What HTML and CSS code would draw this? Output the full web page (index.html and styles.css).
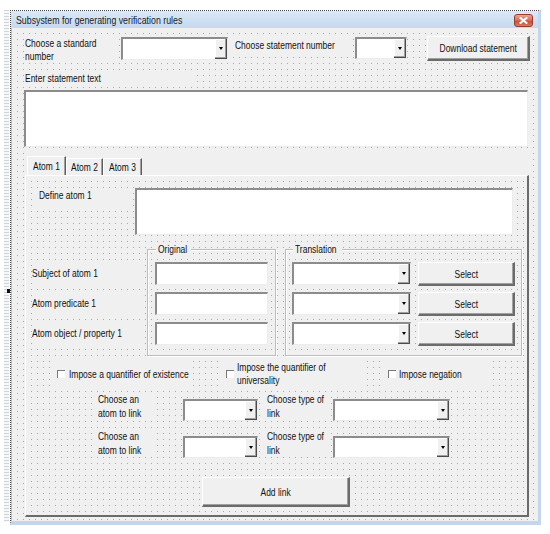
FILE: index.html
```html
<!DOCTYPE html>
<html lang="en">
<head>
  <meta charset="UTF-8">
  <title>Subsystem for generating verification rules</title>
  <link rel="stylesheet" href="styles.css">
</head>
<body>
  <div class="screen">
    <div class="gutter">
      <div class="rail"></div>
      <div class="handle"></div>
    </div>

    <div class="window">
      <div class="titlebar">
        <span class="t caption">Subsystem for generating verification rules</span>
        <div class="close-btn">
          <svg width="9" height="7" viewBox="0 0 9 7"><path d="M1.5 1 L7.5 6 M7.5 1 L1.5 6" stroke="#fff" stroke-width="2" stroke-linecap="square"/></svg>
        </div>
      </div>

      <div class="client dotted">
        <!-- Standard / statement choice -->
        <div class="row top-row">
          <div class="lbl lbl-standard"><span class="t">Choose a standard<br>number</span></div>
          <div class="combo combo-standard"><span class="drop"></span></div>
          <div class="lbl lbl-statement"><span class="t">Choose statement number</span></div>
          <div class="combo combo-statement"><span class="drop"></span></div>
          <div class="btn btn-download"><span class="t">Download statement</span></div>
        </div>

        <div class="lbl lbl-enter"><span class="t">Enter statement text</span></div>
        <div class="textbox statement-text"></div>

        <!-- Atoms multipage -->
        <div class="multipage">
          <div class="tabs">
            <div class="tab tab-1 active"><span class="t">Atom 1</span></div>
            <div class="tab tab-2"><span class="t">Atom 2</span></div>
            <div class="tab tab-3"><span class="t">Atom 3</span></div>
          </div>

          <div class="page dotted">
            <div class="row define-row">
              <div class="lbl lbl-define"><span class="t">Define atom 1</span></div>
              <div class="textbox define-text"></div>
            </div>

            <div class="row frames-row">
              <div class="atom-labels">
                <div class="lbl lbl-part"><span class="t">Subject of atom 1</span></div>
                <div class="lbl lbl-part"><span class="t">Atom predicate 1</span></div>
                <div class="lbl lbl-part"><span class="t">Atom object / property 1</span></div>
              </div>

              <fieldset class="frame frame-original">
                <legend class="legend-original"><span class="t">Original</span></legend>
                <div class="textbox part-text"></div>
                <div class="textbox part-text"></div>
                <div class="textbox part-text"></div>
              </fieldset>

              <fieldset class="frame frame-translation">
                <legend class="legend-translation"><span class="t">Translation</span></legend>
                <div class="pick-row">
                  <div class="combo part-combo"><span class="drop"></span></div>
                  <div class="btn btn-select"><span class="t">Select</span></div>
                </div>
                <div class="pick-row">
                  <div class="combo part-combo"><span class="drop"></span></div>
                  <div class="btn btn-select"><span class="t">Select</span></div>
                </div>
                <div class="pick-row">
                  <div class="combo part-combo"><span class="drop"></span></div>
                  <div class="btn btn-select"><span class="t">Select</span></div>
                </div>
              </fieldset>
            </div>

            <div class="row checks-row">
              <div class="check check-exist"><span class="box"></span><span class="t">Impose a quantifier of existence</span></div>
              <div class="check check-univ"><span class="box"></span><span class="t">Impose the quantifier of<br>universality</span></div>
              <div class="check check-neg"><span class="box"></span><span class="t">Impose negation</span></div>
            </div>

            <div class="row link-row link-row-1">
              <div class="lbl lbl-atom"><span class="t">Choose an<br>atom to link</span></div>
              <div class="combo combo-atom"><span class="drop"></span></div>
              <div class="lbl lbl-type"><span class="t">Choose type of<br>link</span></div>
              <div class="combo combo-type"><span class="drop"></span></div>
            </div>
            <div class="row link-row link-row-2">
              <div class="lbl lbl-atom"><span class="t">Choose an<br>atom to link</span></div>
              <div class="combo combo-atom"><span class="drop"></span></div>
              <div class="lbl lbl-type"><span class="t">Choose type of<br>link</span></div>
              <div class="combo combo-type"><span class="drop"></span></div>
            </div>

            <div class="btn btn-add"><span class="t">Add link</span></div>
          </div>
        </div>
      </div>
    </div>
  </div>
</body>
</html>
```

FILE: styles.css
```css
* {
  box-sizing: border-box;
}

body {
  margin: 0;
  background: #fff;
  font-family: "Liberation Sans", Arial, sans-serif;
  font-size: 11px;
  color: #111;
}

/* the form font is narrower than Arial: squeeze the text runs */
.t {
  display: inline-block;
  vertical-align: top;
  white-space: nowrap;
  transform: scaleX(0.77);
  transform-origin: 0 50%;
}

.screen {
  display: flex;
  padding-top: 10px;
}

/* left edge of the editor with the selection handle */
.gutter {
  position: relative;
  width: 10px;
  height: 512px;
}

.rail {
  margin-left: 4px;
  width: 5px;
  height: 100%;
  background: repeating-linear-gradient(180deg, #cdd4de 0 1px, #f6f7f9 1px 3px);
}

.handle {
  position: absolute;
  top: 279px;
  left: 7px;
  width: 3px;
  height: 4px;
  background: #111;
}

.window {
  width: 531px;
  height: 515px;
  border-top: 1px dotted #444;
  border-left: 1px dotted #444;
  border-right: 3px solid #c3d6ee;
  border-bottom: 4px solid #c3d6ee;
  display: flex;
  flex-direction: column;
}

.titlebar {
  height: 17px;
  display: flex;
  align-items: center;
  padding-left: 5px;
  background: linear-gradient(#dbe8f7, #c5d9f0);
  color: #1b1b1b;
}

.titlebar .caption {
  transform: scaleX(0.8);
}

.close-btn {
  margin-left: auto;
  margin-right: 5px;
  margin-top: 2px;
  width: 19px;
  height: 13px;
  border: 1px solid #9a3c2c;
  border-radius: 3px;
  background: linear-gradient(#e9a797, #d56a55 50%, #c44a36 51%, #d97a62);
  display: flex;
  align-items: center;
  justify-content: center;
}

/* grid of the form designer */
.dotted {
  background-color: #f0f0f0;
  background-image: linear-gradient(90deg, #f0f0f0 5px, transparent 5px), linear-gradient(#f0f0f0 5px, #a6a6a6 5px);
  background-size: 6px 6px;
}

.client {
  flex: 1;
  display: flex;
  flex-direction: column;
  align-items: flex-start;
  padding: 8px 0 0 12px;
  border-left: 1px solid #aebfd2;
}

.row {
  display: flex;
  align-items: flex-start;
}

.lbl {
  background: #f0f0f0;
  line-height: 13px;
}

/* controls */
.textbox {
  background: #fff;
  border-style: solid;
  border-width: 2px 1px 1px 2px;
  border-color: #8c8c8c #ececec #ececec #8c8c8c;
}

.combo {
  display: flex;
  justify-content: flex-end;
  background: #fff;
  border-style: solid;
  border-width: 2px 1px 1px 2px;
  border-color: #8c8c8c #ececec #ececec #8c8c8c;
}

.drop {
  width: 12px;
  height: 100%;
  display: flex;
  align-items: center;
  justify-content: center;
  background: #f0f0f0;
  border-right: 1px solid #4a4a4a;
  border-bottom: 1px solid #4a4a4a;
  box-shadow: inset -1px -1px #a0a0a0, inset 1px 1px #fff;
}

.drop::after {
  content: "";
  border-left: 2.5px solid transparent;
  border-right: 2.5px solid transparent;
  border-top: 3px solid #000;
}

.btn {
  display: flex;
  align-items: center;
  justify-content: center;
  background: #f0f0f0;
  border-style: solid;
  border-width: 1px 2px 2px 1px;
  border-color: #fff #6b6b6b #6b6b6b #fff;
  box-shadow: inset -1px -1px #a0a0a0;
}

.btn .t,
.tab .t {
  transform-origin: 50% 50%;
}

/* first row */
.top-row {
  height: 26px;
}

.lbl-standard {
  width: 94px;
  height: 26px;
  padding: 1px 0 0 1px;
}

.combo-standard {
  margin: 1px 0 0 3px;
  width: 107px;
  height: 23px;
}

.lbl-statement {
  margin: 1px 0 0 5px;
  width: 117px;
  height: 17px;
  padding: 2px 0 0 2px;
}

.combo-statement {
  margin: 1px 0 0 5px;
  width: 52px;
  height: 22px;
}

.btn-download {
  margin-left: 20px;
  width: 103px;
  height: 25px;
}

.lbl-enter {
  margin-top: 9px;
  width: 173px;
  height: 16px;
  padding: 1px 0 0 1px;
}

.statement-text {
  margin-top: 3px;
  width: 504px;
  height: 57px;
}

/* multipage */
.multipage {
  margin: 3px 0 0 1px;
  width: 504px;
  height: 367px;
  display: flex;
  flex-direction: column;
}

.tabs {
  height: 25px;
  display: flex;
  align-items: flex-end;
  padding-left: 2px;
  background: #f0f0f0;
}

.tab {
  height: 17px;
  line-height: 16px;
  display: flex;
  justify-content: center;
  border-top: 1px solid #fff;
  border-left: 1px solid #fff;
  border-right: 1px solid #5e5e5e;
  box-shadow: inset -1px 0 #a0a0a0;
}

.tab.active {
  height: 19px;
  line-height: 18px;
}

.tab-1 { width: 39px; }
.tab-2 { width: 37px; }
.tab-3 { width: 39px; }

.page {
  flex: 1;
  display: flex;
  flex-direction: column;
  align-items: flex-start;
  padding: 12px 0 0 6px;
  border-top: 1px solid #fff;
  border-left: 1px solid #fff;
  border-right: 2px solid #6b6b6b;
  border-bottom: 2px solid #6b6b6b;
}

.lbl-define {
  width: 96px;
  height: 20px;
  padding: 1px 0 0 7px;
}

.define-text {
  margin-left: 7px;
  width: 378px;
  height: 47px;
}

.frames-row {
  margin-top: 8px;
  align-items: stretch;
}

.atom-labels {
  width: 115px;
  padding-top: 19px;
  display: flex;
  flex-direction: column;
  gap: 7px;
}

.lbl-part {
  height: 23px;
  line-height: 23px;
  margin-right: 4px;
}

.frame {
  margin: 0;
  min-width: 0;
  display: flex;
  flex-direction: column;
  border: 1px solid #bdbdbd;
  box-shadow: 1px 1px #fff, inset 1px 1px #fff;
}

.frame legend {
  margin-left: 1px;
  padding: 0 2px;
  line-height: 13px;
  background: #f0f0f0;
}

.legend-original { width: 35px; }
.legend-translation { width: 49px; }

.frame-original {
  width: 129px;
  padding: 6px 0 0 7px;
  gap: 7px;
}

.part-text {
  width: 113px;
  height: 23px;
}

.frame-translation {
  margin-left: 9px;
  width: 237px;
  padding: 6px 0 9px 6px;
  gap: 6px;
}

.pick-row {
  display: flex;
}

.part-combo {
  width: 119px;
  height: 23px;
}

.btn-select {
  margin-left: 7px;
  width: 97px;
  height: 24px;
}

/* check boxes */
.checks-row {
  margin: 3px 0 0 21px;
  height: 30px;
  align-items: center;
}

.check {
  display: flex;
  align-items: center;
  background: #f0f0f0;
  line-height: 13px;
}

.box {
  width: 8px;
  height: 8px;
  flex-shrink: 0;
  background: #fff;
  border-top: 1px solid #7a7a7a;
  border-left: 1px solid #7a7a7a;
}

.check-exist {
  width: 139px;
  height: 26px;
  padding-left: 4px;
  gap: 4px;
}

.check-univ {
  margin-left: 30px;
  width: 144px;
  height: 28px;
  padding-left: 4px;
  gap: 3px;
}

.check-neg {
  margin-left: 16px;
  width: 106px;
  height: 30px;
  padding-left: 6px;
  gap: 3px;
}

/* links between atoms */
.link-row {
  margin-left: 63px;
}

.link-row-1 { margin-top: 3px; }
.link-row-2 { margin-top: 8px; }

.lbl-atom {
  width: 57px;
  height: 28px;
  padding-left: 3px;
  line-height: 14px;
}

.combo-atom {
  margin: 7px 0 0 31px;
  width: 75px;
  height: 22px;
}

.lbl-type {
  margin-left: 7px;
  width: 63px;
  height: 28px;
  padding-left: 2px;
  line-height: 14px;
}

.combo-type {
  margin: 7px 0 0 5px;
  width: 117px;
  height: 22px;
}

.btn-add {
  margin: 19px 0 0 170px;
  width: 148px;
  height: 30px;
}
```
